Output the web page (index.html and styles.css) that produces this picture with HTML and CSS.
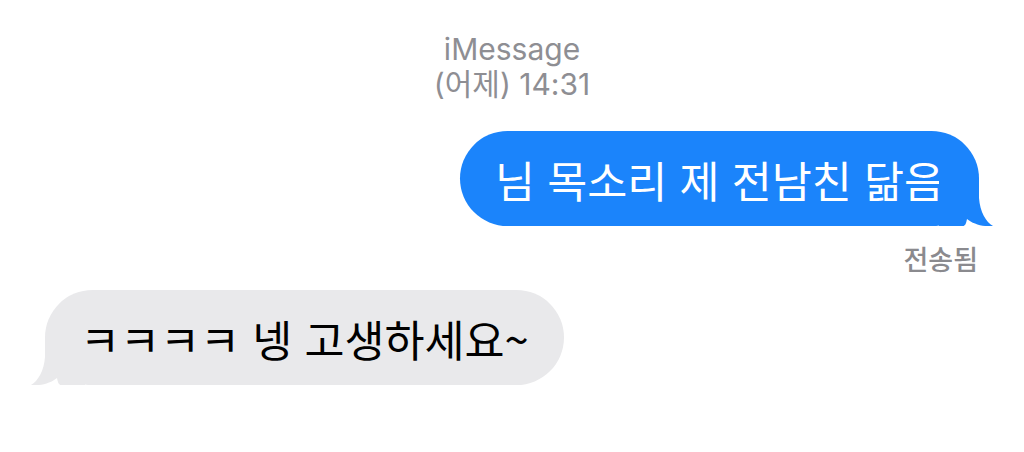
FILE: index.html
```html
<!DOCTYPE html>
<html lang="ko">
<head>
  <meta charset="UTF-8" />
  <meta name="viewport" content="width=device-width, initial-scale=1" />
  <title>iMessage</title>
  <link rel="stylesheet" href="styles.css">
</head>
<body>

  <div class="chat">
    <div class="chat-header">
      <div class="service">iMessage</div>
      <div class="time">(어제) 14:31</div>
    </div>

    <div class="row row-out">
      <div class="bubble bubble-out">
        님 목소리 제 전남친 닮음
        <svg class="tail tail-out" width="56" height="48" viewBox="0 0 56 48">
          <path d="M0 48 L24 48 C26 48 27 46 28 41 C34 46 44 49 54 48 C47 44 41 34 40 20 L40 0 L0 0 Z" />
        </svg>
      </div>
    </div>
    <div class="status">전송됨</div>

    <div class="row row-in">
      <div class="bubble bubble-in">
        ㅋㅋㅋㅋ 넹 고생하세요~
        <svg class="tail tail-in" width="56" height="48" viewBox="0 0 56 48">
          <path d="M0 48 L24 48 C26 48 27 46 28 41 C34 46 44 49 54 48 C47 44 41 34 40 20 L40 0 L0 0 Z" />
        </svg>
      </div>
    </div>
  </div>

</body>
</html>
```

FILE: styles.css
```css
body {
  margin: 0;
  background: #ffffff;
  font-family: Inter, "Noto Sans CJK KR", sans-serif;
}
.chat {
  padding: 0 45px;
}
.chat-header {
  padding-top: 32px;
  text-align: center;
  color: #8e8e93;
  font-size: 30px;
  line-height: 35px;
}
.row {
  display: flex;
}
.row-out {
  justify-content: flex-end;
  margin-top: 29px;
}
.row-in {
  justify-content: flex-start;
  margin-top: 16px;
}
.bubble {
  position: relative;
  height: 95px;
  line-height: 97px;
  padding: 0 35px;
  border-radius: 48px;
  font-family: "Noto Sans CJK KR", sans-serif;
  font-size: 43.5px;
  white-space: nowrap;
}
.bubble-out {
  background: #1b84fb;
  color: #ffffff;
}
.bubble-in {
  background: #e9e9eb;
  color: #000000;
}
.tail {
  position: absolute;
  bottom: 0;
  display: block;
}
.tail-out {
  right: -16px;
  fill: #1b84fb;
}
.tail-in {
  left: -16px;
  fill: #e9e9eb;
  transform: scaleX(-1);
}
.status {
  margin-top: 18px;
  text-align: right;
  padding-right: 1px;
  color: #8a8a8e;
  font-family: "Noto Sans CJK KR", sans-serif;
  font-weight: 500;
  font-size: 27px;
  line-height: 30px;
}
```
